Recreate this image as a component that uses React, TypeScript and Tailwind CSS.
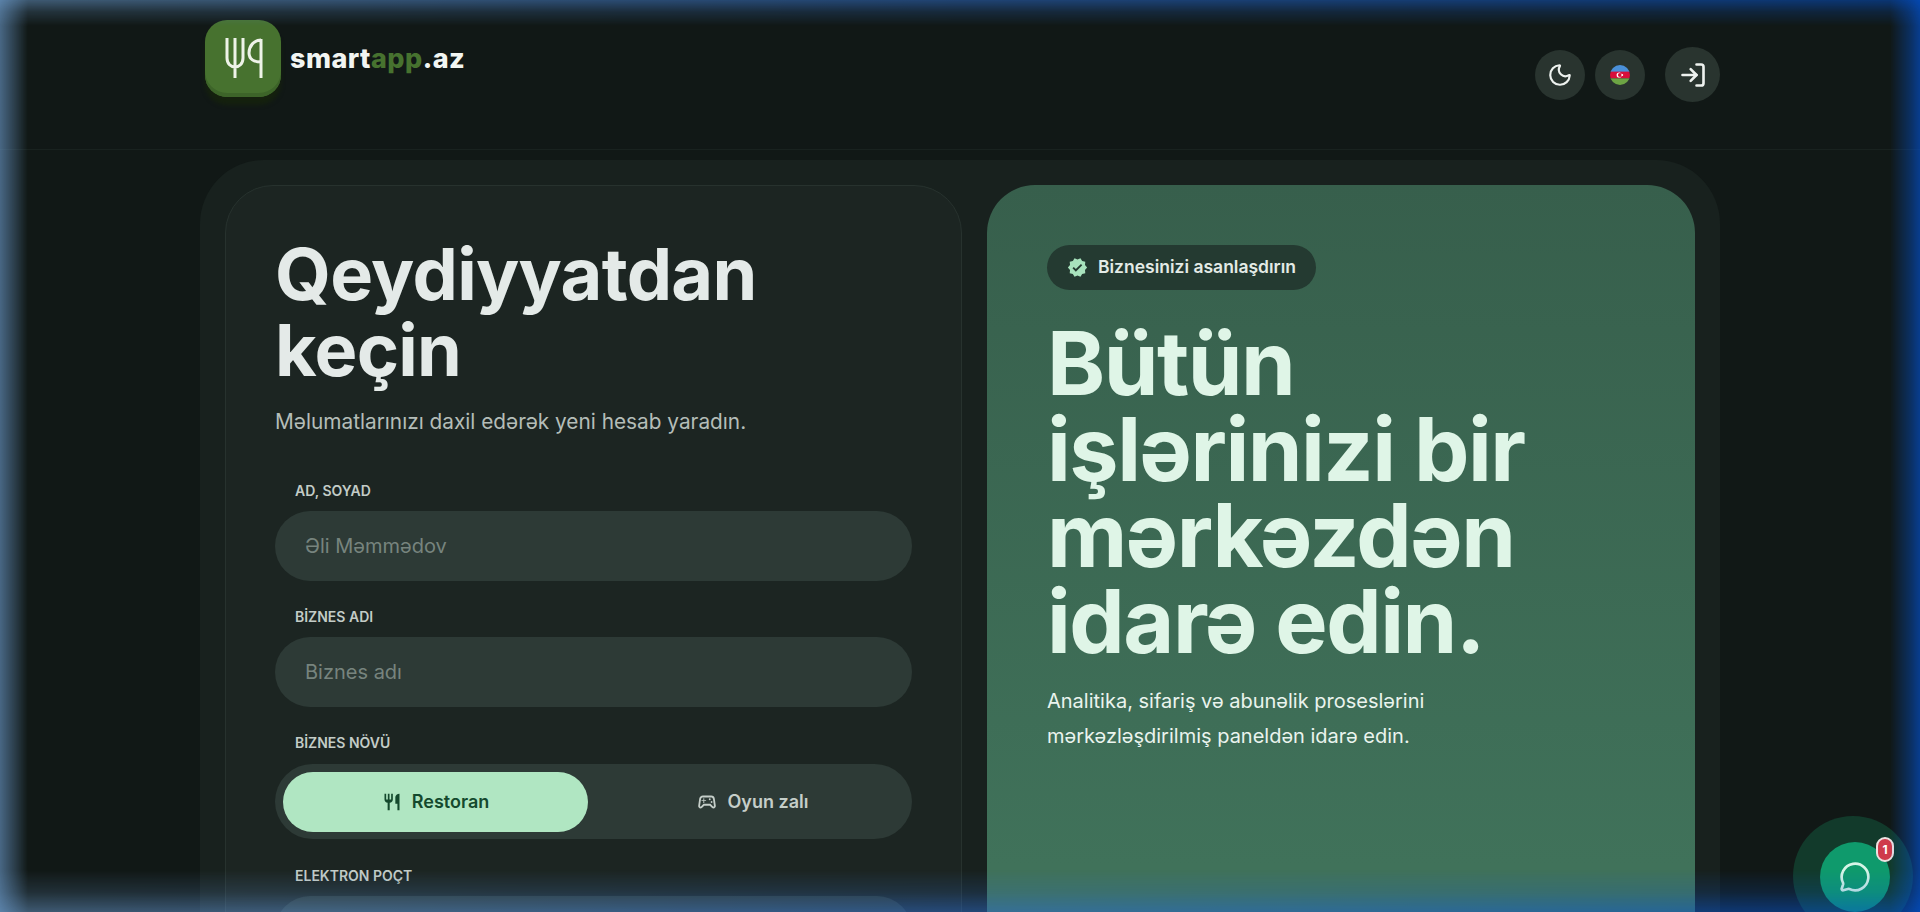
import { LogIn, MessageCircle, Moon } from "lucide-react";
import { MdOutlineSportsEsports, MdRestaurant, MdVerified } from "react-icons/md";

function Field({ label, placeholder }: { label: string; placeholder: string }) {
  return (
    <div className="flex flex-col">
      <div className="ml-5 mb-[11px] h-[18px] text-sm leading-[18px] font-semibold text-[#c3ccc7]">{label}</div>
      <div className="flex h-[70px] items-center rounded-full bg-[#2d3a36] px-[30px] text-xl text-[#77847e]">{placeholder}</div>
    </div>
  );
}

function Flag() {
  return (
    <svg viewBox="0 0 20 20" className="h-5 w-5">
      <defs>
        <clipPath id="flag-circle"><circle cx="10" cy="10" r="10" /></clipPath>
      </defs>
      <g clipPath="url(#flag-circle)">
        <rect width="20" height="7" fill="#4a90d9" />
        <rect y="6.6" width="20" height="6.8" fill="#d80f3a" />
        <rect y="13.4" width="20" height="7" fill="#6da544" />
        <circle cx="9.2" cy="10" r="2.6" fill="#fff" />
        <circle cx="10" cy="10" r="2.1" fill="#d80f3a" />
        <circle cx="12.2" cy="10" r="1" fill="#fff" />
      </g>
    </svg>
  );
}

function LogoMark() {
  return (
    <svg viewBox="0 0 76 77" className="h-[77px] w-[76px]" fill="none" stroke="#eef3e8" strokeWidth="3">
      <path d="M22 18v20c0 6 4 9 8 9s8-3 8-9V18M30 18v40" />
      <path d="M56 19v39M56 20c-7 0-12 6-12 13 0 6 5 9 12 9" />
    </svg>
  );
}

export default function App() {
  return (
    <div className="relative h-screen overflow-hidden bg-[#111816] font-['Inter',sans-serif]">
      <header className="h-[150px] border-b border-[#19221f]">
        <div className="mx-auto flex h-full w-[1520px] justify-between">
          <div className="ml-[5px] mt-5 flex items-start gap-[9px]">
            <div className="flex h-[77px] w-[76px] items-center justify-center rounded-[22px] bg-[#47722f] shadow-[inset_0_-4px_0_#3d6429,0_8px_4px_#15210e]">
              <LogoMark />
            </div>
            <div className="mt-[21px] text-[27px] leading-[36px] font-extrabold tracking-[0.45px] text-[#f2f5f2]">
              smart<span className="text-[#47722f]">app</span>.az
            </div>
          </div>
          <div className="flex items-center">
            <div className="flex h-[50px] w-[50px] items-center justify-center rounded-full bg-[#29342f] text-[#eef2ef]">
              <Moon size={26} strokeWidth={2} />
            </div>
            <div className="ml-[10px] flex h-[50px] w-[50px] items-center justify-center rounded-full bg-[#29342f]">
              <Flag />
            </div>
            <div className="ml-5 flex h-[55px] w-[55px] items-center justify-center rounded-full bg-[#29342f] text-[#eef2ef]">
              <LogIn size={28} strokeWidth={2.25} />
            </div>
          </div>
        </div>
      </header>

      <main className="mx-auto mt-[10px] flex w-[1520px] gap-[25px] rounded-[64px] bg-[#18211e] p-[25px]">
        <section className="w-[737px] rounded-[48px] border border-[#27322e] bg-[#1c2522] px-[49px] pt-[50px] pb-10">
          <h1 className="text-[72px] leading-[76px] font-bold tracking-[-0.7px] text-[#e4eae8]">Qeydiyyatdan keçin</h1>
          <p className="mt-[18px] h-8 text-[20.8px] leading-8 text-[#b4bdb8]">Məlumatlarınızı daxil edərək yeni hesab yaradın.</p>
          <div className="mt-[44px] flex flex-col gap-[27px]">
            <Field label="AD, SOYAD" placeholder="Əli Məmmədov" />
            <Field label="BİZNES ADI" placeholder="Biznes adı" />
            <div className="mb-[1px] flex flex-col">
              <div className="ml-5 mb-3 h-[18px] text-sm leading-[18px] font-semibold text-[#c3ccc7]">BİZNES NÖVÜ</div>
              <div className="flex h-[75px] rounded-full bg-[#2d3a36] p-2">
                <div className="flex h-[60px] w-[305px] items-center justify-center gap-[10px] rounded-full bg-[#b0e6c2] text-lg font-semibold text-[#14492d]">
                  <MdRestaurant size={20} />
                  Restoran
                </div>
                <div className="flex h-[60px] flex-1 items-center justify-center gap-[10px] pl-3 text-lg font-semibold text-[#c5cec9]">
                  <MdOutlineSportsEsports size={22} />
                  Oyun zalı
                </div>
              </div>
            </div>
            <Field label="ELEKTRON POÇT" placeholder="" />
          </div>
        </section>

        <section className="h-[800px] w-[708px] rounded-[48px] bg-[linear-gradient(to_bottom,#375f4c,#40725a_85%)] px-[60px] pt-[60px]">
          <div className="flex h-[45px] w-[269px] items-center gap-[10px] rounded-full bg-[#243a31] pl-5 text-[17.5px] font-semibold text-[#e3ebe6]">
            <MdVerified size={21} className="text-[#a8e3bd]" />
            Biznesinizi asanlaşdırın
          </div>
          <h2 className="mt-[30px] text-[88px] leading-[86px] font-bold tracking-[-1.5px] text-[#dff5e7]">Bütün işlərinizi bir mərkəzdən idarə edin.</h2>
          <p className="mt-5 w-[520px] text-xl leading-[35px] text-[#eaf4ee]">Analitika, sifariş və abunəlik proseslərini mərkəzləşdirilmiş paneldən idarə edin.</p>
        </section>
      </main>

      <div className="absolute left-[1793px] top-[816px] flex h-[120px] w-[120px] items-center justify-center rounded-full bg-[#123a2b]">
        <div className="relative ml-1 mt-[2px] flex h-[70px] w-[70px] items-center justify-center rounded-full bg-[#0f9a6c] text-[#d6f5e7]">
          <MessageCircle size={32} strokeWidth={2} />
          <div className="absolute left-[56px] top-[-5px] flex h-[25px] w-[18px] items-center justify-center rounded-[9px] border-2 border-[#eee2e2] bg-[#cf3a4b] text-[12px] font-bold text-white">1</div>
        </div>
      </div>

      <div className="pointer-events-none absolute inset-0 bg-[linear-gradient(90deg,#6d9ccd,#2f6fd0_50%,#0352d0)] [mask-image:linear-gradient(90deg,rgba(0,0,0,.6),rgba(0,0,0,.35)_12px,transparent_28px),linear-gradient(270deg,rgba(0,0,0,.65),rgba(0,0,0,.4)_10px,transparent_30px),linear-gradient(180deg,rgba(0,0,0,.5),rgba(0,0,0,.2)_12px,transparent_26px),linear-gradient(0deg,rgba(0,0,0,.5),rgba(0,0,0,.18)_20px,transparent_42px)]" />
    </div>
  );
}
